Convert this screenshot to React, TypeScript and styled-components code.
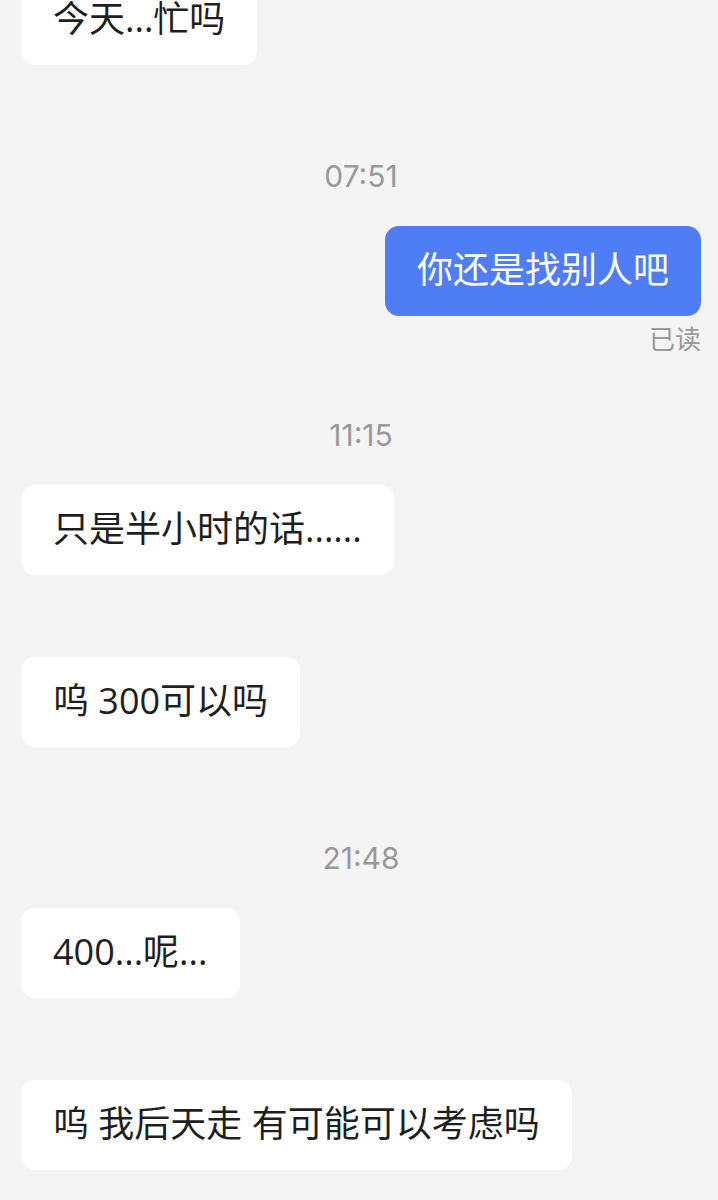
import styled, { createGlobalStyle } from 'styled-components';

const GlobalStyle = createGlobalStyle`
  body {
    margin: 0;
    background-color: #f4f4f4;
    font-family: Inter, 'Noto Sans CJK SC', sans-serif;
  }
`;

const Chat = styled.main`
  display: flex;
  flex-direction: column;
  margin-top: -25px;
  padding: 0 17px 30px 21px;
`;

const Time = styled.time`
  align-self: center;
  margin: 11px 0 32px;
  color: #999999;
  font-size: 30px;
  line-height: 36px;
`;

const Message = styled.div<{ $own?: boolean }>`
  display: flex;
  flex-direction: column;
  align-items: ${({ $own }) => ($own ? 'flex-end' : 'flex-start')};
  margin-bottom: ${({ $own }) => ($own ? '47px' : '82px')};

  &:last-child {
    margin-bottom: 0;
  }
`;

const Bubble = styled.p<{ $own?: boolean }>`
  margin: 0;
  padding: 26px 32px 28px;
  border-radius: 14px;
  background-color: ${({ $own }) => ($own ? '#4e7df6' : '#ffffff')};
  color: ${({ $own }) => ($own ? '#ffffff' : '#1f1f1f')};
  font-family: 'Open Sans', 'Noto Sans CJK SC', sans-serif;
  font-size: 36px;
  line-height: 36px;
`;

const Status = styled.span`
  margin-top: 5px;
  color: #999999;
  font-size: 26px;
  line-height: 38px;
`;

type ChatMessage = {
  text: string;
  time?: string;
  own?: boolean;
};

const messages: ChatMessage[] = [
  { text: '今天...忙吗' },
  { time: '07:51', text: '你还是找别人吧', own: true },
  { time: '11:15', text: '只是半小时的话......' },
  { text: '呜 300可以吗' },
  { time: '21:48', text: '400...呢...' },
  { text: '呜 我后天走 有可能可以考虑吗' },
];

export default function App() {
  return (
    <>
      <GlobalStyle />
      <Chat lang="zh-CN">
        {messages.map(({ text, time, own }) => [
          time && <Time key={time}>{time}</Time>,
          <Message key={text} $own={own}>
            <Bubble $own={own}>{text}</Bubble>
            {own && <Status>已读</Status>}
          </Message>,
        ])}
      </Chat>
    </>
  );
}
